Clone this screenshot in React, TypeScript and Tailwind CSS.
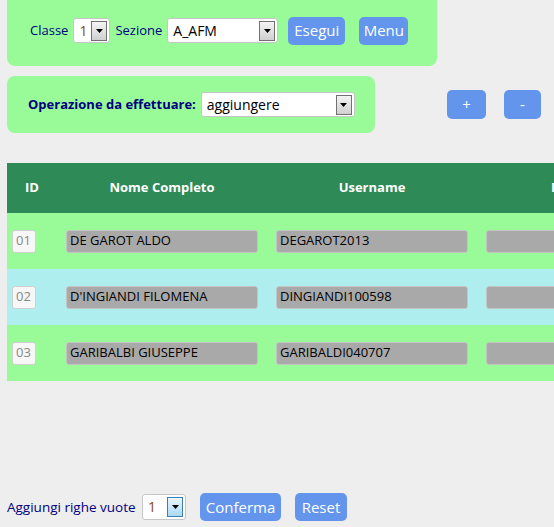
import React from "react";

type Row = { id: string; name: string; user: string; bg: string };

const rows: Row[] = [
  { id: "01", name: "DE GAROT ALDO", user: "DEGAROT2013", bg: "bg-[#98fb98]" },
  { id: "02", name: "D'INGIANDI FILOMENA", user: "DINGIANDI100598", bg: "bg-[#afeeee]" },
  { id: "03", name: "GARIBALBI GIUSEPPE", user: "GARIBALDI040707", bg: "bg-[#98fb98]" },
];

function Arrow({ blue }: { blue?: boolean }) {
  return (
    <div
      className={`flex h-[20px] w-[16px] shrink-0 items-center justify-center border ${
        blue
          ? "border-[#3c7fb1] bg-gradient-to-b from-[#eaf6fd] to-[#a7d9f5]"
          : "border-[#707070] bg-gradient-to-b from-[#f4f4f4] to-[#d0d0d0]"
      }`}
    >
      <svg width="7" height="4" viewBox="0 0 7 4">
        <path d="M0 0h7L3.5 4z" fill="#000" />
      </svg>
    </div>
  );
}

function Select({
  value,
  width,
  height = "h-[25px]",
  brown,
  blue,
}: {
  value: string;
  width: string;
  height?: string;
  brown?: boolean;
  blue?: boolean;
}) {
  return (
    <div
      className={`flex ${width} ${height} items-center rounded-[3px] border border-[#c6c6c6] bg-white pr-[2px]`}
    >
      <span
        className={`flex-1 pl-[5px] text-[14px] leading-none ${
          brown ? "text-[#8b4513]" : "text-black"
        }`}
      >
        {value}
      </span>
      <Arrow blue={blue} />
    </div>
  );
}

function Btn({ label, width, height = "h-[28px]" }: { label: string; width: string; height?: string }) {
  return (
    <button
      className={`flex ${width} ${height} items-center justify-center rounded-[5px] bg-[#6495ed] text-[15px] leading-none text-white`}
    >
      {label}
    </button>
  );
}

function Cell({ text }: { text?: string }) {
  return (
    <div className="flex w-[210px] justify-center">
      <div className="flex h-[23px] w-[192px] items-center rounded-[3px] border border-[#c4c4c4] bg-[#a9a9a9] pl-[3px] text-[13px] text-black">
        {text}
      </div>
    </div>
  );
}

export default function App() {
  return (
    <div className="relative h-[527px] w-[554px] overflow-hidden bg-[#eeeeee] font-['Open_Sans',sans-serif]">
      {/* Classe / Sezione panel */}
      <div className="ml-[7px] flex h-[66px] w-[430px] items-center rounded-b-[8px] bg-[#98fb98] pb-[5px] pl-[23px]">
        <span className="text-[13px] text-[#000080]">Classe</span>
        <div className="ml-[5px]">
          <Select value="1" width="w-[37px]" brown />
        </div>
        <span className="ml-[5px] text-[13px] text-[#000080]">Sezione</span>
        <div className="ml-[5px]">
          <Select value="A_AFM" width="w-[111px]" />
        </div>
        <div className="ml-[10px]">
          <Btn label="Esegui" width="w-[57px]" />
        </div>
        <div className="ml-[14px]">
          <Btn label="Menu" width="w-[49px]" />
        </div>
      </div>

      {/* Operazione */}
      <div className="mt-[10px] flex items-center">
        <div className="ml-[7px] flex h-[57px] w-[368px] items-center rounded-[8px] bg-[#98fb98] pl-[21px]">
          <span className="text-[13px] font-bold text-[#000080]">Operazione da effettuare:</span>
          <div className="ml-[5px]">
            <Select value="aggiungere" width="w-[154px]" />
          </div>
        </div>
        <div className="ml-[72px]">
          <Btn label="+" width="w-[39px]" height="h-[29px]" />
        </div>
        <div className="ml-[18px]">
          <Btn label="-" width="w-[37px]" height="h-[29px]" />
        </div>
      </div>

      {/* Table */}
      <div className="ml-[7px] mt-[30px] w-[800px]">
        <div className="flex h-[50px] items-center bg-[#2e8b57] text-[13px] font-bold text-white">
          <div className="w-[50px] text-center">ID</div>
          <div className="w-[210px] text-center">Nome Completo</div>
          <div className="w-[210px] text-center">Username</div>
          <div className="w-[210px] text-center">Password</div>
        </div>
        {rows.map((r) => (
          <div key={r.id} className={`flex h-[56px] items-center ${r.bg}`}>
            <div className="w-[50px] pl-[5px]">
              <div className="flex h-[23px] w-[24px] items-center rounded-[3px] border border-[#d0d0d0] bg-[#f7f7f7] pl-[3px] text-[13px] text-[#888]">
                {r.id}
              </div>
            </div>
            <Cell text={r.name} />
            <Cell text={r.user} />
            <Cell />
          </div>
        ))}
      </div>

      {/* Bottom controls */}
      <div className="mt-[112px] flex items-center pl-[7px]">
        <span className="w-[130px] whitespace-nowrap text-[13.5px] text-[#000080]">Aggiungi righe vuote</span>
        <div className="ml-[5px]">
          <Select value="1" width="w-[44px]" height="h-[26px]" brown blue />
        </div>
        <div className="ml-[14px]">
          <Btn label="Conferma" width="w-[81px]" />
        </div>
        <div className="ml-[14px]">
          <Btn label="Reset" width="w-[52px]" />
        </div>
      </div>
    </div>
  );
}
